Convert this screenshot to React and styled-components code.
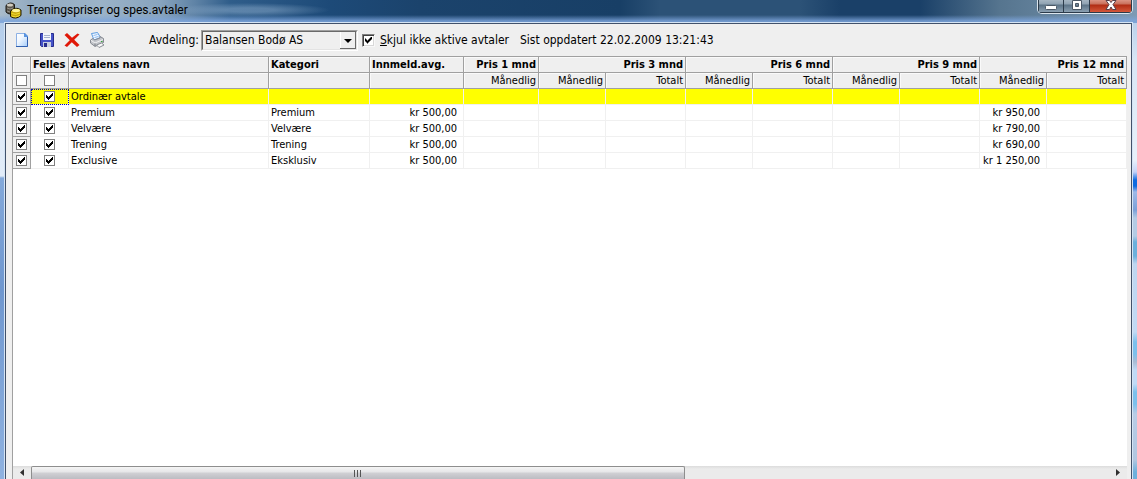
import React, { useState } from "react"
import styled, { createGlobalStyle, css } from "styled-components"

const GlobalStyle = createGlobalStyle`
  * {
    box-sizing: border-box;
  }

  body {
    margin: 0;
    overflow: hidden;
  }
`

const Desktop = styled.div`
  display: flex;
  flex-direction: column;
  height: 100vh;
  font-family: "DejaVu Sans Condensed", "Noto Sans", sans-serif;
  font-size: 12px;
  color: #000;
  background:
    linear-gradient(#b4cbe4 0, #b9d2f0 60px, #dfeaf7 120px, #e2ecf8 176px, #84a9da 178px, #6f97cf 290px, #8fb2e0 100%) left / 6px 100% no-repeat,
    linear-gradient(
      #a9c4e4 0, #d8e6f5 60px, #e8f1fa 160px, #c4d2f8 172px, #0e6be0 180px, #0e6be0 186px,
      #9db9e8 192px, #7ba0d8 210px, #b4cbe4 218px, #b4cbe4 236px, #6cb0dc 242px, #6cb0dc 256px,
      #bed6f0 264px, #c2daf4 332px, #7cc0ec 342px, #7cc0ec 354px, #aabcd4 362px, #c0daf6 370px,
      #c0daf6 384px, #7cc0ec 392px, #7cc0ec 404px, #b8cce6 414px, #b0c6e0 460px, #6cb0dc 472px
    ) right / 6px 100% no-repeat;
`

const TitleBar = styled.header`
  display: flex;
  justify-content: space-between;
  height: 23px;
  padding: 0 4px 0 5px;
  background:
    linear-gradient(transparent 15px, rgba(125, 165, 220, 0.85) 21px),
    radial-gradient(ellipse 80px 7px at 250px 10px, rgba(150, 180, 210, 0.45) 30%, transparent 100%),
    linear-gradient(90deg, #a9bccb 0, #93abc1 30px, #9bb3c8 100px, #88a4be 160px, #5f83a6 195px, #2f5d8a 230px,
      #1d4a78 330px, #1b436c 420px, #183f66 620px, #2c5277 660px, #2c5277 800px, #1a4068 840px, #1a4068 920px,
      #56758f 1000px, #7d9ab4 1137px);
`

const Caption = styled.div`
  display: flex;
  align-items: center;
  gap: 5px;
  height: 20px;
`

const Title = styled.h1`
  margin: 0;
  font-family: Roboto, sans-serif;
  font-size: 12px;
  font-weight: 400;
  line-height: 20px;
`

const WindowButtons = styled.div`
  display: flex;
  height: 14px;
  border: 1px solid #dbe5ee;
  border-top: 0;
  border-radius: 0 0 5px 5px;
  overflow: hidden;
`

const WindowButton = styled.button`
  display: flex;
  justify-content: center;
  width: ${props => (props.$close ? 42 : 26)}px;
  padding: 0;
  border: 1px solid #2c3b4a;
  border-top: 0;
  border-left-width: ${props => (props.$first ? 1 : 0)}px;
  background: ${props =>
    props.$close
      ? "linear-gradient(#dc9484 0, #c9705c 4px, #b02c14 5px, #d4573a 100%)"
      : "linear-gradient(#a5b5c2 0, #8fa2b2 4px, #5c7386 5px, #8ba0b2 100%)"};
`

const Client = styled.main`
  flex: 1;
  display: flex;
  flex-direction: column;
  min-height: 0;
  margin: 0 5px;
  padding: 0 4px 0 6px;
  background: #efefef;
  border: 1px solid #41516b;
  border-bottom: 0;
  box-shadow: 0 0 0 1px #d5e4f4;
`

const Toolbar = styled.div`
  display: flex;
  align-items: center;
  height: 32px;
  flex: none;
`

const Tools = styled.div`
  display: flex;
  gap: 9px;
  width: 137px;
  padding-left: 2px;
`

const ToolButton = styled.button`
  display: flex;
  width: 16px;
  height: 16px;
  padding: 0;
  border: 0;
  background: none;
`

const FieldLabel = styled.label`
  width: 52px;
`

const SelectBox = styled.span`
  display: flex;
  width: 157px;
  height: 21px;
  margin-right: 4px;
  border: 1px solid;
  border-color: #a0a0a0 #fff #fff #a0a0a0;
  position: relative;

  &::after {
    content: "";
    position: absolute;
    right: 5px;
    top: 8px;
    border: 4px solid transparent;
    border-top-color: #000;
    border-bottom: 0;
    pointer-events: none;
  }
`

const Select = styled.select`
  flex: 1;
  appearance: none;
  padding: 0 20px 0 2px;
  border: 1px solid;
  border-color: #696969 #e3e3e3 #e3e3e3 #696969;
  border-radius: 0;
  outline: 0;
  background:
    linear-gradient(#696969, #696969) right / 1px 100% no-repeat,
    linear-gradient(#696969, #696969) right bottom / 16px 1px no-repeat,
    linear-gradient(#fff, #fff) right 15px top / 1px 100% no-repeat,
    #efefef;
  color: #000;
  font: inherit;
`

const checkMark = css`
  &:checked::before {
    content: "";
    width: 7px;
    height: 7px;
    background: #000;
    clip-path: polygon(
      0 2px, 1px 2px, 1px 3px, 2px 3px, 2px 4px, 3px 4px, 3px 3px, 4px 3px, 4px 2px, 5px 2px, 5px 1px, 6px 1px,
      6px 0, 7px 0, 7px 3px, 6px 3px, 6px 4px, 5px 4px, 5px 5px, 4px 5px, 4px 6px, 3px 6px, 3px 7px, 2px 7px,
      2px 6px, 1px 6px, 1px 5px, 0 5px
    );
  }
`

const Check = styled.input`
  appearance: none;
  display: grid;
  place-content: center;
  width: 11px;
  height: 11px;
  margin: 0 auto;
  background: #fff;
  border: 1px solid #808080;
  ${checkMark}
`

const ToolbarCheck = styled(Check)`
  width: 13px;
  height: 13px;
  margin: 0 5px 0 0;
  border-color: #808080 #f8f8f8 #f8f8f8 #808080;
  box-shadow: inset 1px 1px #404040, inset -1px -1px #d8d8d8;
`

const CheckLabel = styled.label`
  display: flex;
  align-items: center;
  margin-right: 11px;
`

const Grid = styled.section`
  flex: 1;
  min-height: 0;
  display: flex;
  flex-direction: column;
  background: #fff;
  border-left: 1px solid #a0a0a0;
`

const GridBody = styled.div`
  flex: 1;
  min-height: 0;
  overflow: hidden;
`

const Table = styled.table`
  table-layout: fixed;
  width: 1114px;
  border-collapse: separate;
  border-spacing: 0;
  border-top: 1px solid #a0a0a0;
  font-size: 11px;
  line-height: 15px;
`

const HeadCell = styled.th`
  height: 16px;
  padding: 0 2px;
  background: #efefef;
  border-right: 1px solid #a0a0a0;
  border-bottom: 1px solid #a0a0a0;
  box-shadow: inset 1px 1px #fafafa;
  font-weight: ${props => (props.$sub ? 400 : 700)};
  text-align: ${props => props.$align || "left"};
  white-space: nowrap;
`

const Cell = styled.td`
  height: 16px;
  padding: 0 ${props => (props.$align === "right" ? 6 : 2)}px 0 2px;
  background: ${props => (props.$marked ? "#ff0" : "#fff")};
  border-right: 1px solid #f0f0f0;
  border-bottom: 1px solid #f0f0f0;
  text-align: ${props => props.$align || "left"};
  white-space: nowrap;
  ${props =>
    props.$focused &&
    css`
      outline: 1px dotted #0000c0;
      outline-offset: -1px;
    `}
`

const Indicator = styled.td`
  height: 16px;
  padding: 0;
  background: #efefef;
  border-right: 1px solid #a0a0a0;
  border-bottom: 1px solid #a0a0a0;
`

const ScrollBar = styled.div`
  display: flex;
  flex: none;
  height: 13px;
  background: linear-gradient(#dcdcdc 0, #ebebeb 3px);
`

const ScrollButton = styled.button`
  display: flex;
  justify-content: center;
  align-items: center;
  width: 18px;
  padding: 0;
  border: 0;
  background: none;
`

const Track = styled.div`
  flex: 1;
`

const Thumb = styled.div`
  display: flex;
  justify-content: center;
  align-items: center;
  width: 60.7%;
  height: 100%;
  border: 1px solid #8e8e8e;
  border-bottom: 0;
  border-radius: 2px 2px 0 0;
  background: linear-gradient(#f5f5f5 0, #e6e6e8 5px, #d0d0d4 6px, #bcbcc2 100%);
`

const CoinsIcon = () => (
  <svg width="17" height="17" viewBox="0 0 17 17">
    <path d="M1 3.500 Q5 -1 9.500 2.500 V10 Q5 14 1 10Z" fill="#5a564c" stroke="#1c1a14" />
    <ellipse cx="5" cy="3" rx="3" ry="1.500" fill="#d0ccc0" />
    <path d="M2 6q3 2 6 0M2 9q3 2 6 0" fill="none" stroke="#98948a" />
    <path d="M5.500 9 Q11 4 16 8 V13.500 Q11 18 5.500 14.500Z" fill="#c8a810" stroke="#1c1800" />
    <ellipse cx="11" cy="8.500" rx="4" ry="1.700" fill="#fff79a" />
    <path d="M6.500 11.500q4 2 8.500-.5M6.500 14q4 2 8.500-.5" fill="none" stroke="#f4e030" />
  </svg>
)

const NewIcon = () => (
  <svg width="16" height="16" viewBox="0 0 16 16">
    <defs>
      <linearGradient id="page" x2="1" y2="1">
        <stop stopColor="#fff" />
        <stop offset=".4" stopColor="#f0f7ff" />
        <stop offset="1" stopColor="#a4ccfa" />
      </linearGradient>
    </defs>
    <path d="M2.500 1.500h8l3 3v10h-11z" fill="url(#page)" stroke="#8cb0e4" />
    <path d="M13.500 4v10.500H2" fill="none" stroke="#3060b0" />
    <path d="M10 1h1l3 3v1h-4z" fill="#5a94e0" />
  </svg>
)

const SaveIcon = () => (
  <svg width="16" height="16" viewBox="0 0 16 16">
    <path d="M1.500 1.500h13v13h-12l-1-1z" fill="#4452c8" stroke="#262c8c" />
    <rect x="4" y="1" width="8" height="7" fill="#f2f5fb" />
    <path d="M5 3.500h6M5 5.500h6" stroke="#a4b0cc" />
    <rect x="4" y="10" width="8" height="5" fill="#c8cede" />
    <rect x="5" y="11" width="3" height="4" fill="#262c8c" />
  </svg>
)

const DeleteIcon = () => (
  <svg width="16" height="16" viewBox="0 0 16 16">
    <path
      d="M.5 3 3 1 8 5.800 13.500 1.500 15.500 2.500 10.200 7.800 15.500 13 13 15 7.800 10.300 3 15 .5 13.500 5.800 8.200Z"
      fill="#e01808"
    />
  </svg>
)

const PrintIcon = () => (
  <svg width="16" height="16" viewBox="0 0 16 16">
    <path d="M2.500 1.500 8.500 .5l3 5L5 8z" fill="#f2f8ff" stroke="#5b9be0" />
    <path d="m4.500 3.500 4-1M5.500 5.500l4-1" stroke="#8abaf0" />
    <path d="M1.500 8 4 6.500 5.500 8 11 6V4.500l3.500 2v4L6 14.500 1.500 11z" fill="#c2c5ca" stroke="#868a92" />
    <path d="M2 8.300 6 11l8-3.500" fill="none" stroke="#f0f1f3" />
    <path d="M6 11.500V14" stroke="#747980" />
    <path d="m7.500 13 5-2 2.500 2-5 2.500z" fill="#fafafa" stroke="#888d94" />
    <path d="M12 9.500h1.500" stroke="#38a838" />
  </svg>
)

const periods = [1, 3, 6, 9, 12]
const columnWidths = [18, 38, 200, 101, 94, 75, 67, 80, 67, 80, 67, 80, 67, 80]

const agreements = [
  { name: "Ordinær avtale", marked: true },
  { name: "Premium", category: "Premium", fee: "kr 500,00", monthly12: "kr 950,00" },
  { name: "Velvære", category: "Velvære", fee: "kr 500,00", monthly12: "kr 790,00" },
  { name: "Trening", category: "Trening", fee: "kr 500,00", monthly12: "kr 690,00" },
  { name: "Exclusive", category: "Eksklusiv", fee: "kr 500,00", monthly12: "kr 1 250,00" },
]

const AgreementRow = ({ item }) => {
  // the nine price columns, only the monthly price for 12 months is filled in
  const prices = ["", "", "", "", "", "", "", item.monthly12, ""]
  return (
    <tr>
      <Indicator>
        <Check type="checkbox" defaultChecked aria-label={`Aktiv ${item.name}`} />
      </Indicator>
      <Cell $marked={item.marked} $focused={item.marked}>
        <Check type="checkbox" defaultChecked aria-label={`Felles ${item.name}`} />
      </Cell>
      <Cell $marked={item.marked}>{item.name}</Cell>
      <Cell $marked={item.marked}>{item.category}</Cell>
      <Cell $marked={item.marked} $align="right">{item.fee}</Cell>
      {prices.map((price, i) => (
        <Cell key={i} $marked={item.marked} $align="right">{price}</Cell>
      ))}
    </tr>
  )
}

const PriceTable = () => (
  <Table>
    <colgroup>
      {columnWidths.map((width, i) => (
        <col key={i} width={width} />
      ))}
    </colgroup>
    <thead>
      <tr>
        <HeadCell />
        <HeadCell>Felles</HeadCell>
        <HeadCell>Avtalens navn</HeadCell>
        <HeadCell>Kategori</HeadCell>
        <HeadCell>Innmeld.avg.</HeadCell>
        {periods.map(months => (
          <HeadCell key={months} colSpan={months === 1 ? 1 : 2} $align="right">
            Pris {months} mnd
          </HeadCell>
        ))}
      </tr>
      <tr>
        <HeadCell $sub><Check type="checkbox" aria-label="Alle aktive" /></HeadCell>
        <HeadCell $sub><Check type="checkbox" aria-label="Alle felles" /></HeadCell>
        <HeadCell $sub />
        <HeadCell $sub />
        <HeadCell $sub />
        {periods.map(months => (
          <React.Fragment key={months}>
            <HeadCell $sub $align="right">Månedlig</HeadCell>
            {months > 1 && <HeadCell $sub $align="right">Totalt</HeadCell>}
          </React.Fragment>
        ))}
      </tr>
    </thead>
    <tbody>
      {agreements.map(item => (
        <AgreementRow key={item.name} item={item} />
      ))}
    </tbody>
  </Table>
)

const App = () => {
  const [hideInactive, setHideInactive] = useState(true)

  return (
    <Desktop>
      <GlobalStyle />
      <TitleBar>
        <Caption>
          <CoinsIcon />
          <Title>Treningspriser og spes.avtaler</Title>
        </Caption>
        <WindowButtons>
          <WindowButton $first aria-label="Minimer">
            <svg width="12" height="11">
              <rect x=".5" y="5.500" width="11" height="4" rx="1" fill="#fff" stroke="#4b5866" />
            </svg>
          </WindowButton>
          <WindowButton aria-label="Maksimer">
            <svg width="12" height="11">
              <path d="M1.500.5h9v9h-9zM4.500 3.500v3h3v-3z" fill="#fff" fillRule="evenodd" stroke="#4b5866" />
            </svg>
          </WindowButton>
          <WindowButton $close aria-label="Lukk">
            <svg width="12" height="11">
              <path d="M1 .5h3.500L6 2.500 7.500.5H11L8 4.500l3 5H7.500L6 7 4.500 9.500H1l3-5z" fill="#fff" stroke="#58404a" />
            </svg>
          </WindowButton>
        </WindowButtons>
      </TitleBar>
      <Client>
        <Toolbar>
          <Tools>
            <ToolButton aria-label="Ny"><NewIcon /></ToolButton>
            <ToolButton aria-label="Lagre"><SaveIcon /></ToolButton>
            <ToolButton aria-label="Slett"><DeleteIcon /></ToolButton>
            <ToolButton aria-label="Skriv ut"><PrintIcon /></ToolButton>
          </Tools>
          <FieldLabel htmlFor="department">Avdeling:</FieldLabel>
          <SelectBox>
            <Select id="department">
              <option>Balansen Bodø AS</option>
            </Select>
          </SelectBox>
          <CheckLabel>
            <ToolbarCheck
              type="checkbox"
              checked={hideInactive}
              onChange={e => setHideInactive(e.target.checked)}
            />
            <span><u>S</u>kjul ikke aktive avtaler</span>
          </CheckLabel>
          <span>Sist oppdatert 22.02.2009 13:21:43</span>
        </Toolbar>
        <Grid>
          <GridBody>
            <PriceTable />
          </GridBody>
          <ScrollBar>
            <ScrollButton aria-label="Rull til venstre">
              <svg width="4" height="7"><path d="M4 0v7L0 3.500z" fill="#303030" /></svg>
            </ScrollButton>
            <Track>
              <Thumb>
                <svg width="8" height="7"><path d="M.5 0v7M3.500 0v7M6.500 0v7" stroke="#555" /></svg>
              </Thumb>
            </Track>
            <ScrollButton aria-label="Rull til høyre">
              <svg width="4" height="7"><path d="M0 0v7l4-3.500z" fill="#303030" /></svg>
            </ScrollButton>
          </ScrollBar>
        </Grid>
      </Client>
    </Desktop>
  )
}

export default App
